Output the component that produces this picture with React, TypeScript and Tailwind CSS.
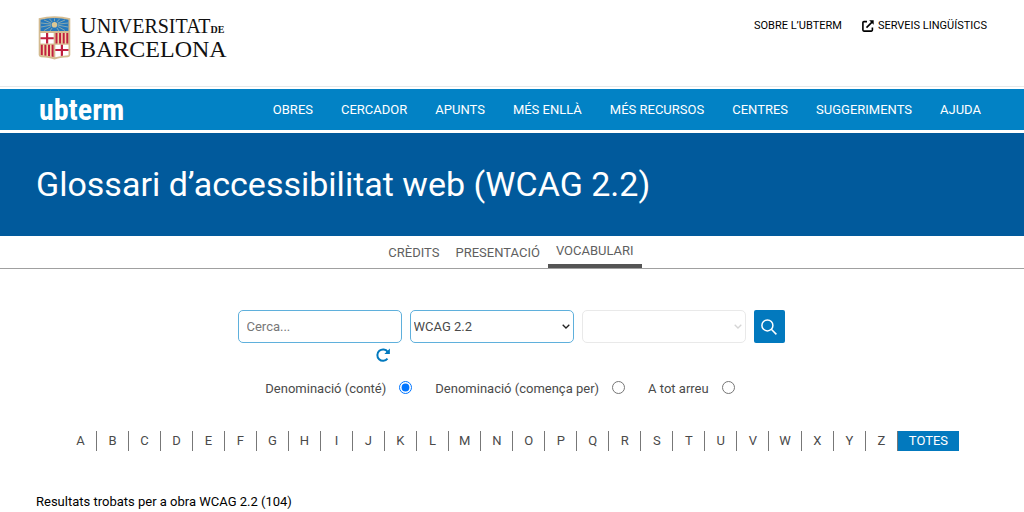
import { useState } from 'react';

const navItems = ['OBRES', 'CERCADOR', 'APUNTS', 'MÉS ENLLÀ', 'MÉS RECURSOS', 'CENTRES', 'SUGGERIMENTS', 'AJUDA'];
const letters = 'ABCDEFGHIJKLMNOPQRSTUVWXYZ'.split('');
const modes = ['Denominació (conté)', 'Denominació (comença per)', 'A tot arreu'];

function Shield() {
  return (
    <svg viewBox="0 0 33 44" className="h-11 w-[33px]" aria-hidden="true">
      <path d="M.7 2.2Q16.500-1.600 32.300 2.200V39Q32 40.800 30 41.200Q21 41.600 16.500 43.600Q12 41.600 3 41.200Q1 40.800.7 39Z" fill="#d3bb90" />
      <path d="M2.500 3.700Q16.500.4 30.500 3.700V15H2.500Z" fill="#2478bd" />
      <g stroke="#c9c8a4" strokeWidth=".6">
        <path d="M16.500 8.500V2.500M16.500 8.500L11.500 3M16.500 8.500L21.500 3M16.500 8.500L6 4M16.500 8.500L27 4M16.500 8.500L3 7M16.500 8.500L30 7M16.500 8.500L3 11M16.500 8.500L30 11M16.500 8.500L6 14.500M16.500 8.500L27 14.500M16.500 8.500L12 15M16.500 8.500L21 15" />
      </g>
      <circle cx="16.500" cy="8.700" r="3.500" fill="#2478bd" />
      <circle cx="16.500" cy="8.700" r="2.800" fill="#ddc794" />
      <path d="M2.500 17H15.700V27.600H2.500Z" fill="#fff" />
      <path d="M8 17H10.200V27.600H8ZM2.500 21.300H15.700V23.300H2.500Z" fill="#c0203f" />
      <path d="M17.300 17H30.500V27.600H17.300Z" fill="#f0d9a8" />
      <path d="M17.500 17h2v10.600h-2zM21.100 17h2v10.600h-2zM24.700 17h2v10.600h-2zM28.300 17h2v10.600h-2z" fill="#c0203f" />
      <path d="M2.500 28.800H15.700V41.300Q10 39.900 2.500 39.200Z" fill="#f0d9a8" />
      <path d="M2.800 28.800h2v10.400l-2-.2zM6.400 28.800h2v11l-2-.4zM10 28.800h2v11.500l-2-.4zM13.600 28.800h2v12.300l-2-.6z" fill="#c0203f" />
      <path d="M17.300 28.800H30.500V39.200Q23 39.900 17.300 41.300Z" fill="#fff" />
      <path d="M22.800 28.800H25V39.800L22.800 40.100ZM17.300 33H30.500V35H17.300Z" fill="#c0203f" />
    </svg>
  );
}

function ExternalIcon() {
  return (
    <svg viewBox="0 0 12 12" className="size-3" fill="none" stroke="currentColor" strokeWidth="1.600" aria-hidden="true">
      <path d="M5 1.600H1.900Q.9 1.600.9 2.600V10.100Q.9 11.100 1.900 11.100H9.400Q10.400 11.100 10.400 10.100V7.500" />
      <path d="M4.500 7.600L10 2.100" />
      <path d="M7.200.3H11.700V4.800Z" fill="currentColor" stroke="none" />
    </svg>
  );
}

function Chevron({ className }: { className: string }) {
  return (
    <svg viewBox="0 0 8 5" className={className} fill="none" stroke="currentColor" strokeWidth="1.300" aria-hidden="true">
      <path d="M.7.7L4 4L7.300.7" />
    </svg>
  );
}

export default function App() {
  const [mode, setMode] = useState(modes[0]);
  return (
    <div className="bg-white font-['Roboto',sans-serif] text-[13px] leading-5 text-[#4a4a4a]">
      <header>
        <div className="flex items-start justify-between border-b border-[#e8e8e8] pt-4 pr-[37px] pb-[26px] pl-[38px]">
          <a href="#inici" className="flex gap-[9px] text-[#111]" aria-label="Universitat de Barcelona">
            <Shield />
            <span className="flex flex-col font-['Liberation_Serif',serif]">
              <span className="flex h-[22px] items-baseline text-xl leading-5">
                <span className="text-[23px] leading-5">U</span>
                <span>NIVERSITAT</span>
                <span className="text-[10px] font-bold">DE</span>
              </span>
              <span className="text-2xl leading-[22px]">BARCELONA</span>
            </span>
          </a>
          <nav className="flex gap-5 pt-px text-[11px] leading-[18px] text-black" aria-label="Enllaços">
            <a href="#sobre">SOBRE L’UBTERM</a>
            <a href="#serveis" className="flex items-center gap-1">
              <ExternalIcon />
              SERVEIS LINGÜÍSTICS
            </a>
          </nav>
        </div>
        <div className="mt-[2px] flex h-[41px] items-center justify-between bg-[#0282c5] pr-[43px] pl-[39px] text-white">
          <a href="#ubterm" className="font-['Liberation_Sans_Narrow','Roboto_Condensed',sans-serif] text-3xl font-bold">ubterm</a>
          <nav className="flex gap-7" aria-label="Principal">
            {navItems.map((n) => (
              <a key={n} href="#nav">{n}</a>
            ))}
          </nav>
        </div>
      </header>
      <main>
        <div className="mt-[3px] bg-[#015a9c] px-9 pt-[26px] pb-[27px]">
          <h1 className="text-[34px] leading-[50px] text-white">Glossari d’accessibilitat web (WCAG 2.2)</h1>
        </div>
        <nav className="flex h-[33px] justify-center border-b border-[#a0a0a0] pr-[2px] text-[#5f5f5f]" aria-label="Seccions">
          <a href="#credits" className="px-2 pt-[7px]">CRÈDITS</a>
          <a href="#presentacio" className="px-2 pt-[7px]">PRESENTACIÓ</a>
          <a href="#vocabulari" className="border-b-4 border-[#555] px-2 pt-[5px]" aria-current="page">VOCABULARI</a>
        </nav>
        <form className="mt-[41px] flex flex-col items-center" onSubmit={(e) => e.preventDefault()}>
          <div className="flex gap-2 pr-[2px]">
            <div className="flex w-[164px] flex-col items-end">
              <input
                type="text"
                aria-label="Cerca"
                placeholder="Cerca..."
                className="h-[33px] w-full rounded-[5px] border border-[#5fb0dc] px-2 outline-none placeholder:text-[#777]"
              />
              <button type="reset" aria-label="Reinicia" className="mt-[5px] mr-3 text-[#0279be]">
                <svg viewBox="0 0 14 14" className="size-[14px]" fill="none" stroke="currentColor" strokeWidth="2" aria-hidden="true">
                  <path d="M11.500 10.700A5.700 5.700 0 1 1 11.700 3.800" />
                  <path d="M13.900.5V6H8.400Z" fill="currentColor" stroke="none" />
                </svg>
              </button>
            </div>
            <div className="relative h-[33px] w-[164px]">
              <select aria-label="Obra" className="size-full appearance-none rounded-[5px] border border-[#5fb0dc] px-[3px] text-[#4a4a4a]">
                <option>WCAG 2.2</option>
              </select>
              <Chevron className="pointer-events-none absolute top-[14px] right-1 h-[5px] w-2 text-[#222]" />
            </div>
            <div className="relative h-[33px] w-[164px]">
              <select aria-label="Àrea" disabled className="size-full appearance-none rounded-[5px] border border-[#e9e9e9] px-[3px]" />
              <Chevron className="pointer-events-none absolute top-[14px] right-1 h-[5px] w-2 text-[#d5d5d5]" />
            </div>
            <button type="submit" aria-label="Cerca" className="flex h-[33px] w-[31px] items-center justify-center rounded-[2px] bg-[#0279be] text-white">
              <svg viewBox="0 0 16 16" className="size-4" fill="none" stroke="currentColor" strokeWidth="1.500" aria-hidden="true">
                <circle cx="6.400" cy="6.400" r="5.500" />
                <path d="M10.300 10.300L15.400 15.400" />
              </svg>
            </button>
          </div>
          <div className="mt-[17px] flex gap-[23px] pr-6">
            {modes.map((m) => (
              <label key={m} className="flex gap-[13px]">
                {m}
                <input type="radio" name="mode" className="mt-[2px] size-[13px]" checked={mode === m} onChange={() => setMode(m)} />
              </label>
            ))}
          </div>
        </form>
        <nav className="mt-8 flex justify-center" aria-label="Índex alfabètic">
          {letters.map((l) => (
            <a key={l} href="#lletra" className="min-w-8 border-r border-[#777] px-[10px] text-center">{l}</a>
          ))}
          <a href="#totes" className="bg-[#0279be] px-[11px] text-white">TOTES</a>
        </nav>
        <p className="mt-[41px] px-9 pb-2 text-black">Resultats trobats per a obra WCAG 2.2 (104)</p>
      </main>
    </div>
  );
}
